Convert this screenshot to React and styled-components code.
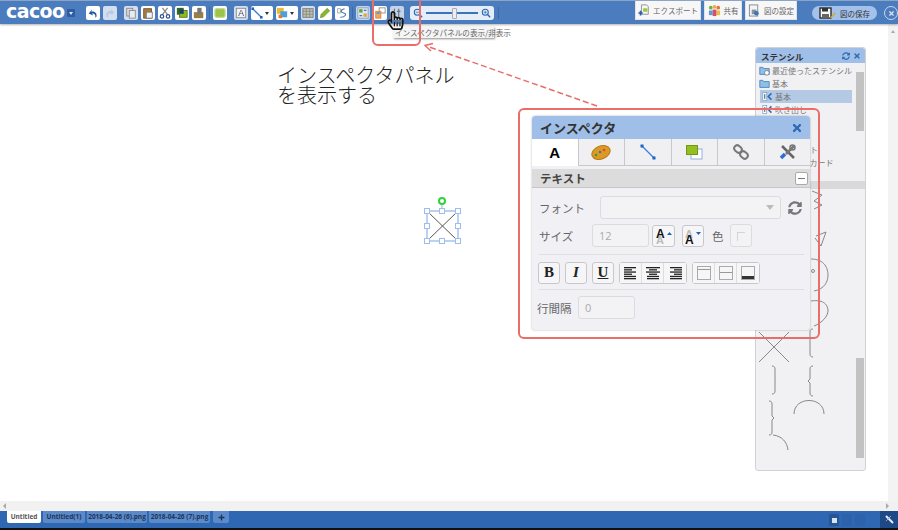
import React from 'react'
import styled, { createGlobalStyle } from 'styled-components'
import { FaTimes, FaSyncAlt, FaPlus, FaRegHandPointer } from 'react-icons/fa'

const GlobalStyle = createGlobalStyle`
  html, body {
    margin: 0;
    padding: 0;
    background: #fff;
  }
  body {
    font-family: "Noto Sans CJK JP", "Open Sans", sans-serif;
  }
`

const RED = '#e96d68'

const Page = styled.div`
  position: relative;
  display: flex;
  flex-direction: column;
  width: 898px;
  height: 530px;
  overflow: hidden;
  background: #fff;
`

const TopBar = styled.div`
  display: flex;
  align-items: flex-start;
  height: 24px;
  flex: none;
  background: #4b7cbd;
  border-top: 1px solid #8da5c4;
  box-sizing: border-box;
  box-shadow: 0 1px 2px rgba(0, 0, 0, 0.3);
  z-index: 2;
`

const Logo = styled.div`
  width: 58px;
  margin: 2px 0 0 6px;
  color: #fff;
  font: 700 19px/17px "DejaVu Sans", sans-serif;
  letter-spacing: -0.6px;
  transform-origin: left center;
`

const LogoMenu = styled.div`
  display: flex;
  justify-content: center;
  align-items: center;
  width: 8px;
  height: 8px;
  margin: 8px 0 0 3px;
  background: #2d5da0;
  border-radius: 1px;
  &::after {
    content: '';
    border: 2px solid transparent;
    border-top: 3px solid #dce6f4;
    margin-top: 3px;
  }
`

const Tools = styled.div`
  display: flex;
  gap: 3px;
  margin: 5px 0 0 ${p => p.$left}px;
`

const ToolButton = styled.div`
  display: flex;
  justify-content: center;
  align-items: center;
  width: 14px;
  height: 14px;
  border-radius: 2px;
  background: ${p => p.$active ? '#c4d3e8' : p.$dim ? '#dfe8f4' : '#fff'};
  opacity: ${p => p.$dim ? 0.92 : 1};
`

const SplitButton = styled(ToolButton)`
  width: 22px;
  justify-content: flex-start;
  gap: 2px;
  &::after {
    content: '';
    border: 2.5px solid transparent;
    border-top: 3px solid #333;
    margin-top: 3px;
  }
`

const ZoomGroup = styled.div`
  display: flex;
  align-items: center;
  gap: 3px;
  width: 84px;
  height: 14px;
  margin: 5px 0 0 6px;
  padding: 0 3px;
  box-sizing: border-box;
  border-radius: 3px;
  background: #e4edf8;
`

const SliderTrack = styled.div`
  position: relative;
  flex: 1;
  height: 2px;
  background: #3d73ba;
`

const SliderThumb = styled.div`
  position: absolute;
  left: 26px;
  top: -4px;
  width: 3px;
  height: 9px;
  background: #eee;
  border: 1px solid #aab;
  border-radius: 1px;
`

const Separator = styled.div`
  width: 1px;
  height: 12px;
  margin: 6px 0 0 ${p => p.$left || 3}px;
  background: #3a6aa8;
`

const ActionButton = styled.div`
  display: flex;
  align-items: center;
  justify-content: center;
  gap: 3px;
  width: ${p => p.$w}px;
  height: 19px;
  margin-left: ${p => p.$left}px;
  background: #f7f7f7;
  border: 1px solid #dfe3e8;
  border-top: 0;
  box-sizing: border-box;
  font-size: 7.5px;
  color: #666;
  white-space: nowrap;
`

const SavePill = styled.div`
  display: flex;
  align-items: center;
  justify-content: center;
  gap: 3px;
  width: 65px;
  height: 14px;
  margin: 5px 0 0 15px;
  border-radius: 7px;
  background: #a3c1ea;
  font-size: 7.5px;
  color: #333;
`

const CloseCircle = styled.div`
  display: flex;
  align-items: center;
  justify-content: center;
  width: 12px;
  height: 12px;
  margin: 5px 0 0 7px;
  border: 1px solid #c8d8ee;
  border-radius: 50%;
  color: #d8e4f4;
  font-size: 7px;
`

const Workspace = styled.div`
  display: flex;
  flex: 1;
  min-height: 0;
`

const Canvas = styled.div`
  flex: 1;
  background: #fff;
`

const VScroll = styled.div`
  display: flex;
  justify-content: center;
  width: 10px;
  padding-top: 4px;
  box-sizing: border-box;
  background: #f3f3f3;
  &::before {
    content: '';
    height: 0;
    border: 2.5px solid transparent;
    border-bottom: 3px solid #aaa;
  }
`

const HScroll = styled.div`
  display: flex;
  justify-content: space-between;
  align-items: center;
  flex: none;
  height: 10px;
  padding: 0 9px 0 3px;
  background: #f1f1f1;
`

const ScrollArrow = styled.div`
  border: 3px solid transparent;
  ${p => p.$right ? 'border-left: 3px solid #aaa; border-right: 0;' : 'border-right: 3px solid #aaa; border-left: 0;'}
`

const TabBar = styled.div`
  display: flex;
  flex: none;
  height: 17px;
  padding-left: 7px;
  background: #2f67b2;
  gap: 2px;
`

const Tab = styled.div`
  display: flex;
  align-items: center;
  justify-content: center;
  width: ${p => p.$w}px;
  height: 12px;
  margin-right: ${p => p.$gap || 0}px;
  background: ${p => p.$active ? '#fff' : '#5a8aca'};
  color: ${p => p.$active ? '#555' : '#1f3554'};
  border-radius: 0 0 2px 2px;
  font: 700 6.5px/12px "Open Sans", sans-serif;
  white-space: nowrap;
`

const TabStatus = styled.div`
  display: flex;
  margin-left: auto;
  gap: 3px;
`

const StatusButton = styled.div`
  display: flex;
  align-items: center;
  justify-content: center;
  width: 10px;
  height: 12px;
  margin-top: 3px;
  background: ${p => p.$on ? '#255797' : '#2c62ab'};
  border-radius: 1px;
  &::after {
    content: ${p => p.$on ? "''" : 'none'};
    width: 5px;
    height: 5px;
    background: #d8e4f2;
  }
`

const StatusCorner = styled.div`
  display: flex;
  align-items: center;
  justify-content: center;
  width: 18px;
  margin-left: 12px;
  background: #1d4a86;
`

const BlackEdge = styled.div`
  flex: none;
  height: 2px;
  background: #111;
`

/* floating stuff on top of the canvas */
const Stencil = styled.div`
  position: absolute;
  left: 755px;
  top: 47px;
  display: flex;
  flex-direction: column;
  width: 111px;
  height: 424px;
  box-sizing: border-box;
  background: #f1f1f4;
  border: 1px solid #d2d2d6;
  border-radius: 3px;
`

const StencilHead = styled.div`
  display: flex;
  align-items: center;
  height: 15px;
  padding: 0 4px 0 5px;
  background: #9fbfe9;
  color: #333;
  font-size: 8.5px;
  font-weight: 700;
  border-radius: 3px 3px 0 0;
  gap: 3px;
  span { margin-right: auto; }
`

const StencilList = styled.div`
  position: relative;
  height: 117px;
  padding-top: 1px;
  overflow: hidden;
`

const StencilItem = styled.div`
  display: flex;
  align-items: center;
  gap: 2px;
  height: 13.1px;
  margin: 0 13px 0 ${p => p.$indent ? 4 : 3}px;
  padding-left: ${p => p.$indent ? 2 : 0}px;
  background: ${p => p.$on ? '#b4c9e4' : 'transparent'};
  color: #777;
  font-size: 8px;
  white-space: nowrap;
`

const Thumb = styled.div`
  position: absolute;
  right: 1px;
  top: ${p => p.$top}px;
  width: 8px;
  height: ${p => p.$h}px;
  background: #c2c2c2;
`

const StencilBand = styled.div`
  height: 8px;
  background: #d9d9d9;
`

const StencilShapes = styled.div`
  position: relative;
  flex: 1;
`

const Inspector = styled.div`
  position: absolute;
  left: 532px;
  top: 116px;
  display: flex;
  flex-direction: column;
  width: 278px;
  height: 214px;
  box-sizing: border-box;
  background: #f1f1f5;
  border-radius: 4px 4px 3px 3px;
  box-shadow: 0 0 2px rgba(0, 0, 0, 0.35);
`

const InspectorHead = styled.div`
  display: flex;
  align-items: center;
  justify-content: space-between;
  height: 23px;
  flex: none;
  padding: 0 7px 0 8px;
  background: #9fbfe8;
  color: #333;
  font-size: 13px;
  font-weight: 700;
  border-radius: 4px 4px 0 0;
`

const InspectorTabs = styled.div`
  display: flex;
  height: 27px;
  flex: none;
`

const InspectorTab = styled.div`
  display: flex;
  align-items: center;
  justify-content: center;
  flex: 1;
  background: ${p => p.$active ? '#fff' : '#f0f0f3'};
  border-right: 1px solid #c8c8c8;
  border-bottom: ${p => p.$active ? '0' : '1px solid #c8c8c8'};
  box-sizing: border-box;
  font: 700 15px "Liberation Sans", sans-serif;
  &:last-child { border-right: 0; }
`

const SectionHead = styled.div`
  display: flex;
  align-items: center;
  justify-content: space-between;
  height: 19px;
  flex: none;
  margin-top: 3px;
  padding: 0 1px 0 8px;
  background: #dcdcdc;
  border-bottom: 1px solid #c6c6c6;
  box-sizing: border-box;
  color: #444;
  font-size: 11.5px;
  font-weight: 700;
`

const Collapse = styled.div`
  display: flex;
  align-items: center;
  justify-content: center;
  width: 11px;
  height: 11px;
  margin-right: 1px;
  background: #fff;
  border: 1px solid #aaa;
  border-radius: 2px;
  &::after {
    content: '';
    width: 7px;
    height: 1px;
    background: #777;
  }
`

const Form = styled.div`
  display: flex;
  flex-direction: column;
  padding: 8px 6px 0 5px;
`

const FormRow = styled.div`
  display: flex;
  align-items: center;
  gap: ${p => p.$gap || 0}px;
  height: 23px;
  margin-bottom: ${p => p.$mb || 0}px;
`

const Label = styled.div`
  width: ${p => p.$w}px;
  padding-left: ${p => p.$pad || 0}px;
  box-sizing: border-box;
  flex: none;
  color: #666;
  font-size: 11.5px;
`

const Field = styled.div`
  display: flex;
  align-items: center;
  justify-content: space-between;
  width: ${p => p.$w}px;
  height: 23px;
  padding: 0 6px;
  box-sizing: border-box;
  flex: none;
  background: #f3f3f5;
  border: 1px solid #dcdcdf;
  border-radius: 3px;
  color: #aaa;
  font: 11px "Open Sans", sans-serif;
`

const SelectArrow = styled.div`
  border: 4.5px solid transparent;
  border-top: 5px solid #bbb;
  border-bottom: 0;
`

const FormatButton = styled.div`
  display: flex;
  align-items: center;
  justify-content: center;
  width: 22px;
  height: 22px;
  box-sizing: border-box;
  flex: none;
  background: #f6f6f8;
  border: 1px solid #c8c8c8;
  border-radius: 3px;
  margin-left: ${p => p.$left || 0}px;
  color: #222;
  font: ${p => p.$italic ? 'italic ' : ''}700 15px "Liberation Serif", serif;
  text-decoration: ${p => p.$underline ? 'underline' : 'none'};
`

const ButtonGroup = styled.div`
  display: flex;
  margin-left: ${p => p.$left || 0}px;
  border: 1px solid #c8c8c8;
  border-radius: 3px;
  & > div {
    width: 22px;
    height: 20px;
    border: 0;
    border-radius: 0;
    border-right: 1px solid #ddd;
  }
  & > div:last-child { border-right: 0; }
`

const Rule = styled.div`
  height: 1px;
  margin: ${p => p.$m};
  background: #dfdfe2;
`

const Annotation = styled.div`
  position: absolute;
  left: 277px;
  top: 65px;
  color: #222;
  font-size: 20px;
  line-height: 20px;
  font-weight: 300;
  white-space: nowrap;
`

const Callout = styled.div`
  position: absolute;
  left: ${p => p.$x}px;
  top: ${p => p.$y}px;
  width: ${p => p.$w}px;
  height: ${p => p.$h}px;
  box-sizing: border-box;
  border: 2px solid ${RED};
  border-radius: 6px;
  pointer-events: none;
  z-index: 4;
`

const Tooltip = styled.div`
  position: absolute;
  left: 393px;
  top: 27px;
  width: 101px;
  height: 11px;
  padding-left: 2px;
  box-sizing: border-box;
  background: #f5f5f5;
  box-shadow: 1px 1px 2px rgba(0, 0, 0, 0.45);
  color: #666;
  font-size: 7.6px;
  line-height: 11px;
  white-space: nowrap;
  z-index: 3;
`

const Cursor = styled.div`
  position: absolute;
  left: 386px;
  top: 11px;
  display: flex;
  color: #111;
  font-size: 19px;
  z-index: 5;
  svg { filter: drop-shadow(0 0 0 #fff); }
`

const Overlay = styled.svg`
  position: absolute;
  left: ${p => p.$x}px;
  top: ${p => p.$y}px;
  z-index: ${p => p.$z || 1};
  overflow: visible;
`

const Icon = ({ children, s = 12 }) => (
  <svg width={s} height={s} viewBox="0 0 14 14">{children}</svg>
)

const Doc = ({ c = '#888' }) => (
  <>
    <rect x="2" y="1.5" width="7" height="9" fill="#e8e8e8" stroke={c} />
    <rect x="5" y="4" width="7" height="9" fill="#f6f6f6" stroke={c} />
  </>
)

const Paste = () => (
  <>
    <rect x="2" y="2" width="9" height="11" fill="#a97c3f" stroke="#6d4d22" />
    <rect x="5" y="6" width="7" height="7" fill="#f4f4f4" stroke="#777" />
  </>
)

const Scissors = () => (
  <g stroke="#30558f" strokeWidth="1.4" fill="none">
    <path d="M4 1l6 8M10 1L4 9" stroke="#888" />
    <circle cx="3.5" cy="11" r="2" />
    <circle cx="10.5" cy="11" r="2" />
  </g>
)

const Front = () => (
  <>
    <rect x="1" y="1" width="8" height="8" fill="#2f6a1f" />
    <rect x="4" y="4" width="9" height="8" fill="#8cbb1e" stroke="#54741a" />
    <rect x="4" y="3" width="5" height="5" fill="#1d3f78" />
  </>
)

const Back = () => (
  <>
    <rect x="1" y="6" width="11" height="7" fill="#9a7d46" />
    <rect x="5" y="1" width="5" height="7" fill="#777" />
  </>
)

const Shape = () => <rect x="1" y="2" width="12" height="10" rx="2" fill="#9cc34a" stroke="#c4dc92" strokeWidth="1.5" />
const TextBox = () => (
  <>
    <rect x="1.5" y="1.5" width="11" height="11" fill="#fff" stroke="#888" />
    <text x="7" y="11" fontSize="10" textAnchor="middle" fill="#444" fontFamily="Liberation Sans">A</text>
  </>
)
const Line = ({ c = '#3a82d8', w = 1.5 }) => (
  <g>
    <path d="M2 2l10 10" stroke={c} strokeWidth={w} />
    <rect x="0.5" y="0.5" width="3" height="3" fill="#1f5fc0" />
    <rect x="10.5" y="10.5" width="3" height="3" fill="#1f5fc0" />
  </g>
)
const Palette = () => (
  <>
    <rect x="1" y="1" width="8" height="7" fill="#e9b93a" />
    <rect x="5" y="5" width="8" height="7" fill="#4aa0e0" />
    <rect x="3" y="9" width="4" height="4" fill="#e07a30" />
  </>
)
const Grid = () => (
  <>
    <rect x="1" y="2" width="12" height="10" fill="#c8c8a8" stroke="#777" />
    <path d="M1 5h12M1 8.500h12M5 2v10M9 2v10" stroke="#777" strokeWidth="0.7" />
  </>
)
const Pencil = () => (
  <>
    <path d="M9.500 1.500l3 3-7 7-4 1 1-4z" fill="#8ab82a" stroke="#5d7d1a" strokeWidth="0.6" />
  </>
)
const Connect = () => (
  <g fill="none" stroke="#3f74b8" strokeWidth="1.3">
    <path d="M10 2C5 3 5 6 9 7s2 5-4 5" />
    <rect x="2" y="2" width="3" height="5" stroke="#888" strokeWidth="0.8" />
  </g>
)
const Layout = () => (
  <>
    <rect x="1" y="1" width="12" height="12" fill="#dfeaf6" stroke="#7c9cc4" />
    <rect x="2.500" y="2.500" width="4" height="4" fill="#6aa531" />
    <rect x="7.500" y="7.500" width="4" height="4" fill="#e2a93a" />
    <path d="M8 4h3M3 10h3" stroke="#3f74b8" strokeWidth="1.3" />
  </>
)
const Stencils = () => (
  <>
    <rect x="6" y="1" width="7" height="6" fill="#fff" stroke="#888" />
    <rect x="2" y="5" width="6" height="8" fill="#f2a65a" stroke="#d48a3a" />
    <rect x="3" y="6" width="4" height="2" fill="#5a9ad8" />
  </>
)
const InspectorGlyph = () => (
  <g stroke="#6a7684" strokeWidth="1.400">
    <path d="M4 2v10M9 2v10" />
    <path d="M2 8h4M7 5h4" />
  </g>
)
const Magnify = ({ plus }) => (
  <g fill="none" stroke="#2e69b3" strokeWidth="1.500">
    <circle cx="6" cy="6" r="4.200" fill="#d8e8f8" />
    <path d="M9.200 9.200l3.600 3.600" strokeWidth="2" />
    <path d={plus ? 'M4 6h4M6 4v4' : 'M4 6h4'} strokeWidth="1" />
  </g>
)
const Arrow = ({ redo }) => (
  <path
    d={redo ? 'M3 11c-1-4 2-7 6-6l-1-3 4 5-5 2 1-2c-3 0-4 2-3 5z' : 'M11 11.500c1-4-2-7-6-6l1-3-4 5 5 2.500-1-2.500c3 0 4.500 2 3.500 5z'}
    fill={redo ? '#bcd0e8' : '#225a9e'}
  />
)

const ExportGlyph = () => (
  <Icon s={12}>
    <path d="M4 1h6l2 2v9H4z" fill="#f6f6f6" stroke="#888" />
    <rect x="6" y="5" width="5" height="4" fill="#9cc34a" />
    <path d="M0.500 10.500h5M3 8v5.500" stroke="#2461b0" strokeWidth="2" />
  </Icon>
)
const ShareGlyph = () => (
  <Icon s={13}>
    <circle cx="3" cy="4" r="2" fill="#6ab04a" />
    <circle cx="11" cy="4" r="2" fill="#e56e50" />
    <circle cx="7" cy="3" r="2" fill="#e8b040" />
    <path d="M1 7h4v5H1z" fill="#5b9bd8" />
    <path d="M9 7h4v5H9z" fill="#e8c040" />
    <path d="M5 6h4v7H5z" fill="#d64f72" />
  </Icon>
)
const SettingsGlyph = () => (
  <Icon s={13}>
    <rect x="1.500" y="1" width="9" height="12" fill="#f4f4f4" stroke="#888" />
    <rect x="4" y="6" width="5" height="5" fill="#8a93a0" />
    <circle cx="9" cy="10" r="2.500" fill="#3f74b8" />
  </Icon>
)
const SaveGlyph = () => (
  <svg width="18" height="12" viewBox="0 0 18 12">
    <rect x="1" y="1" width="11" height="10" fill="#f7f7f7" stroke="#222" strokeWidth="1.300" />
    <rect x="3" y="1" width="6" height="3.500" fill="#333" />
    <rect x="3" y="7" width="7" height="4" fill="#666" />
    <path d="M11 10.500l5-5 1 1-5 5z" fill="#e0a81e" />
  </svg>
)
const FolderGlyph = ({ clock }) => (
  <Icon s={11}>
    <path d="M1 3h4l1 1.500h7V12H1z" fill="#8dc0e8" stroke="#3f7fb8" />
    {clock && <circle cx="10" cy="10" r="3" fill="#fff" stroke="#777" />}
  </Icon>
)
const StencilGlyph = () => (
  <Icon s={11}>
    <rect x="1" y="2" width="5" height="10" fill="#fff" stroke="#7ba7d8" />
    <path d="M3.500 4v6" stroke="#222" />
    <path d="M12 3L8 7l4 4" fill="none" stroke="#2e69b3" strokeWidth="2" />
  </Icon>
)

const PaletteTab = () => (
  <svg width="20" height="17" viewBox="0 0 20 17">
    <ellipse cx="10" cy="8.500" rx="9.500" ry="6.500" transform="rotate(-22 10 8.500)" fill="#dc9a22" stroke="#b8781a" />
    <circle cx="5" cy="11" r="1.300" fill="#3a9a48" />
    <circle cx="9" cy="8" r="1.300" fill="#3f74b8" />
    <circle cx="13" cy="6" r="1.300" fill="#d44" />
  </svg>
)
const LineTab = () => (
  <svg width="16" height="16" viewBox="0 0 16 16">
    <path d="M2 2l12 12" stroke="#2e7fe0" strokeWidth="1.300" />
    <rect x="0.500" y="0.500" width="3" height="3" fill="#1d62c8" />
    <rect x="12.500" y="12.500" width="3" height="3" fill="#1d62c8" />
  </svg>
)
const LayerTab = () => (
  <svg width="17" height="15" viewBox="0 0 17 15">
    <rect x="5" y="4" width="11" height="10" fill="#fff" stroke="#8db0dc" />
    <rect x="0.500" y="0.500" width="11" height="9" fill="#93c01f" stroke="#70961a" />
  </svg>
)
const LinkTab = () => (
  <svg width="16" height="16" viewBox="0 0 16 16" fill="none" stroke="#777" strokeWidth="2">
    <rect x="1" y="2" width="8" height="6" rx="3" transform="rotate(40 5 5)" />
    <rect x="7" y="8" width="8" height="6" rx="3" transform="rotate(40 11 11)" />
  </svg>
)
const ToolsTab = () => (
  <svg width="17" height="17" viewBox="0 0 17 17">
    <path d="M3 2l12 12" stroke="#666" strokeWidth="2.500" />
    <path d="M15 2L7 10" stroke="#777" strokeWidth="2.500" />
    <path d="M6 10l-4 4" stroke="#2e6fd0" strokeWidth="3.500" />
    <circle cx="13.500" cy="3.500" r="2.500" fill="none" stroke="#777" strokeWidth="1.500" />
  </svg>
)

const AlignGlyph = ({ rows }) => (
  <svg width="14" height="14" viewBox="0 0 14 14">
    {rows.map(([x, w], i) => (
      <rect key={i} x={x} y={1 + i * 2.2} width={w} height={1.300} fill="#222" />
    ))}
  </svg>
)
const ValignGlyph = ({ y }) => (
  <svg width="14" height="14" viewBox="0 0 14 14">
    <rect x="0.500" y="0.500" width="13" height="13" fill="none" stroke="#aaa" />
    <rect x="1" y={y} width="12" height={y === 10 ? 3 : 1} fill={y === 10 ? '#333' : '#999'} />
  </svg>
)
const SizeGlyph = ({ up }) => (
  <svg width="18" height="18" viewBox="0 0 18 18">
    <text x="1" y={up ? 17 : 11} fontSize="11" fill="#bbb" fontFamily="Liberation Sans">A</text>
    <text x="1" y={up ? 11 : 17} fontSize="12" fill="#111" fontFamily="Liberation Sans">A</text>
    <path d={up ? 'M12 8h5l-2.500-3z' : 'M12 5h5l-2.500 3z'} fill="#2461b0" />
  </svg>
)

const App = () => (
  <Page>
    <GlobalStyle />
    <TopBar>
      <Logo>cacoo</Logo>
      <LogoMenu />
      <Tools $left={11}>
        <ToolButton><Icon><Arrow /></Icon></ToolButton>
        <ToolButton $dim><Icon><Arrow redo /></Icon></ToolButton>
      </Tools>
      <Tools $left={7}>
        <ToolButton $dim><Icon><Doc /></Icon></ToolButton>
        <ToolButton><Icon><Paste /></Icon></ToolButton>
        <ToolButton><Icon><Scissors /></Icon></ToolButton>
        <ToolButton><Icon><Front /></Icon></ToolButton>
        <ToolButton><Icon><Back /></Icon></ToolButton>
      </Tools>
      <Separator />
      <Tools $left={3}>
        <ToolButton><Icon><Shape /></Icon></ToolButton>
      </Tools>
      <Tools $left={7}>
        <ToolButton $dim><Icon><TextBox /></Icon></ToolButton>
        <SplitButton><Icon><Line /></Icon></SplitButton>
        <SplitButton><Icon><Palette /></Icon></SplitButton>
        <ToolButton $dim><Icon><Grid /></Icon></ToolButton>
        <ToolButton><Icon><Pencil /></Icon></ToolButton>
        <ToolButton><Icon><Connect /></Icon></ToolButton>
      </Tools>
      <Separator />
      <Tools $left={3}>
        <ToolButton $active><Icon><Layout /></Icon></ToolButton>
        <ToolButton><Icon><Stencils /></Icon></ToolButton>
        <ToolButton $active><Icon><InspectorGlyph /></Icon></ToolButton>
      </Tools>
      <ZoomGroup>
        <Icon s={10}><Magnify /></Icon>
        <SliderTrack><SliderThumb /></SliderTrack>
        <Icon s={10}><Magnify plus /></Icon>
      </ZoomGroup>
      <Separator $left={4} />
      <ActionButton $w={66} $left={136}><ExportGlyph />エクスポート</ActionButton>
      <ActionButton $w={38} $left={3}><ShareGlyph />共有</ActionButton>
      <ActionButton $w={52} $left={3}><SettingsGlyph />図の設定</ActionButton>
      <SavePill><SaveGlyph />図の保存</SavePill>
      <CloseCircle><FaTimes /></CloseCircle>
    </TopBar>

    <Workspace>
      <Canvas />
      <VScroll />
    </Workspace>
    <HScroll>
      <ScrollArrow />
      <ScrollArrow $right />
    </HScroll>
    <TabBar>
      <Tab $w={34} $active>Untitled</Tab>
      <Tab $w={42}>Untitled(1)</Tab>
      <Tab $w={60}>2018-04-26 (6).png</Tab>
      <Tab $w={61} $gap={1}>2018-04-26 (7).png</Tab>
      <Tab $w={16}><FaPlus size={7} /></Tab>
      <TabStatus>
        <StatusButton $on />
        <StatusButton />
        <StatusButton />
        <StatusCorner>
          <svg width="9" height="9" viewBox="0 0 9 9">
            <path d="M1 1l7 7" stroke="#e8eef6" strokeWidth="2" />
            <path d="M6 1L1 6" stroke="#8aa8d0" />
          </svg>
        </StatusCorner>
      </TabStatus>
    </TabBar>
    <BlackEdge />

    <Annotation>インスペクタパネル<br />を表示する</Annotation>

    <Overlay $x={420} $y={192} width="46" height="56" viewBox="0 0 46 56">
      <path d="M22 9v10" stroke="#8fb4ea" />
      <circle cx="22" cy="9" r="3" fill="#fff" stroke="#2fd23a" strokeWidth="2" />
      <rect x="7" y="19" width="31" height="30" fill="none" stroke="#8fb4ea" strokeWidth="1.200" />
      <path d="M7 19l31 30M38 19L7 49" stroke="#555" />
      {[[7, 19], [22, 19], [38, 19], [7, 34], [38, 34], [7, 49], [22, 49], [38, 49]].map(([x, y]) => (
        <rect key={`${x}-${y}`} x={x - 2.500} y={y - 2.500} width="5" height="5" fill="#fff" stroke="#9dbcf0" />
      ))}
    </Overlay>

    <Stencil>
      <StencilHead>
        <span>ステンシル</span>
        <FaSyncAlt size={8} color="#2e69b3" />
        <FaTimes size={8} color="#2e69b3" />
      </StencilHead>
      <StencilList>
        <StencilItem><FolderGlyph clock />最近使ったステンシル</StencilItem>
        <StencilItem><FolderGlyph />基本</StencilItem>
        <StencilItem $indent $on><StencilGlyph />基本</StencilItem>
        <StencilItem $indent><StencilGlyph />吹き出し</StencilItem>
        <StencilItem $indent />
        <StencilItem $indent />
        <StencilItem $indent>フローチャート</StencilItem>
        <StencilItem $indent>ランディングカード</StencilItem>
        <Thumb $top={9} $h={59} />
      </StencilList>
      <StencilBand />
      <StencilShapes>
        <Thumb $top={169} $h={100} />
        <Overlay $x={0} $y={0} width="100" height="275" viewBox="0 0 100 275">
          <g fill="none" stroke="#888" strokeWidth="1">
            <path d="M3 143l30 30M33 143L3 173" />
            <path d="M57 140c-2 0-3 1-3 3v22c0 2 1 3 3 3" />
            <path d="M16 177c2 0 3 1 3 3v22c0 2-1 3-3 3" />
            <path d="M57 177c-2 0-3 1-3 3v10l-2 2 2 2v10c0 2 1 3 3 3" />
            <path d="M13 212c2 0 3 1 3 3v12l2 2-2 2v12c0 2-1 3-3 3" />
            <path d="M38 225c0-18 30-18 30 0" />
            <path d="M17 246c9 1 14 7 15 15" />
            <path d="M56 2l10 4-8 6 8 4-8 4M60 47l10-4-5 14-6-8" />
            <path d="M55 70c14 0 17 10 17 16s-3 14-14 16M55 112c14-2 17 5 17 10s-6 12-14 15" />
            <circle cx="57" cy="82" r="1.500" />
          </g>
        </Overlay>
      </StencilShapes>
    </Stencil>

    <Inspector>
      <InspectorHead>
        インスペクタ
        <FaTimes size={12} color="#2e69b3" />
      </InspectorHead>
      <InspectorTabs>
        <InspectorTab $active>A</InspectorTab>
        <InspectorTab><PaletteTab /></InspectorTab>
        <InspectorTab><LineTab /></InspectorTab>
        <InspectorTab><LayerTab /></InspectorTab>
        <InspectorTab><LinkTab /></InspectorTab>
        <InspectorTab><ToolsTab /></InspectorTab>
      </InspectorTabs>
      <SectionHead>テキスト<Collapse /></SectionHead>
      <Form>
        <FormRow $gap={8} $mb={5}>
          <Label $w={55} $pad={2}>フォント</Label>
          <Field $w={181}><span /><SelectArrow /></Field>
          <FaSyncAlt size={14} color="#777" style={{ marginLeft: -1 }} />
        </FormRow>
        <FormRow $mb={7}>
          <Label $w={55} $pad={2}>サイズ</Label>
          <Field $w={57}>12</Field>
          <FormatButton $left={3} style={{ width: 23 }}><SizeGlyph up /></FormatButton>
          <FormatButton $left={7}><SizeGlyph /></FormatButton>
          <Label $w={26} $pad={8}>色</Label>
          <Field $w={22}>
            <svg width="10" height="10" viewBox="0 0 10 10"><rect x="0.500" y="0.500" width="12" height="12" fill="none" stroke="#ccd" /></svg>
          </Field>
        </FormRow>
        <Rule $m="0 0 6px 2px" />
        <FormRow>
          <FormatButton $left={1}>B</FormatButton>
          <FormatButton $left={5} $italic>I</FormatButton>
          <FormatButton $left={5} $underline>U</FormatButton>
          <ButtonGroup $left={5}>
            <FormatButton><AlignGlyph rows={[[0, 12], [0, 8], [0, 12], [0, 8], [0, 12], [0, 12]]} /></FormatButton>
            <FormatButton><AlignGlyph rows={[[0, 14], [3, 8], [0, 14], [3, 8], [1, 12], [1, 12]]} /></FormatButton>
            <FormatButton><AlignGlyph rows={[[2, 12], [6, 8], [2, 12], [6, 8], [2, 12], [2, 12]]} /></FormatButton>
          </ButtonGroup>
          <ButtonGroup $left={5}>
            <FormatButton><ValignGlyph y={3} /></FormatButton>
            <FormatButton><ValignGlyph y={6} /></FormatButton>
            <FormatButton><ValignGlyph y={10} /></FormatButton>
          </ButtonGroup>
        </FormRow>
        <Rule $m="5px 0 6px 2px" />
        <FormRow>
          <Label $w={41}>行間隔</Label>
          <Field $w={57}>0</Field>
        </FormRow>
      </Form>
    </Inspector>

    <Tooltip>インスペクタパネルの表示/非表示</Tooltip>
    <Cursor><FaRegHandPointer /></Cursor>

    <Callout $x={372} $y={-4} $w={49} $h={50} />
    <Callout $x={518} $y={108} $w={302} $h={231} />
    <Overlay $x={0} $y={0} $z={3} width="898" height="530" viewBox="0 0 898 530" style={{ pointerEvents: 'none' }}>
      <path d="M597 106L428 46.500" fill="none" stroke={RED} strokeWidth="1.500" strokeDasharray="6 3" />
      <path d="M433 43.500L425 45.500 431 51" fill="none" stroke={RED} strokeWidth="1.500" />
    </Overlay>
  </Page>
)

export default App
